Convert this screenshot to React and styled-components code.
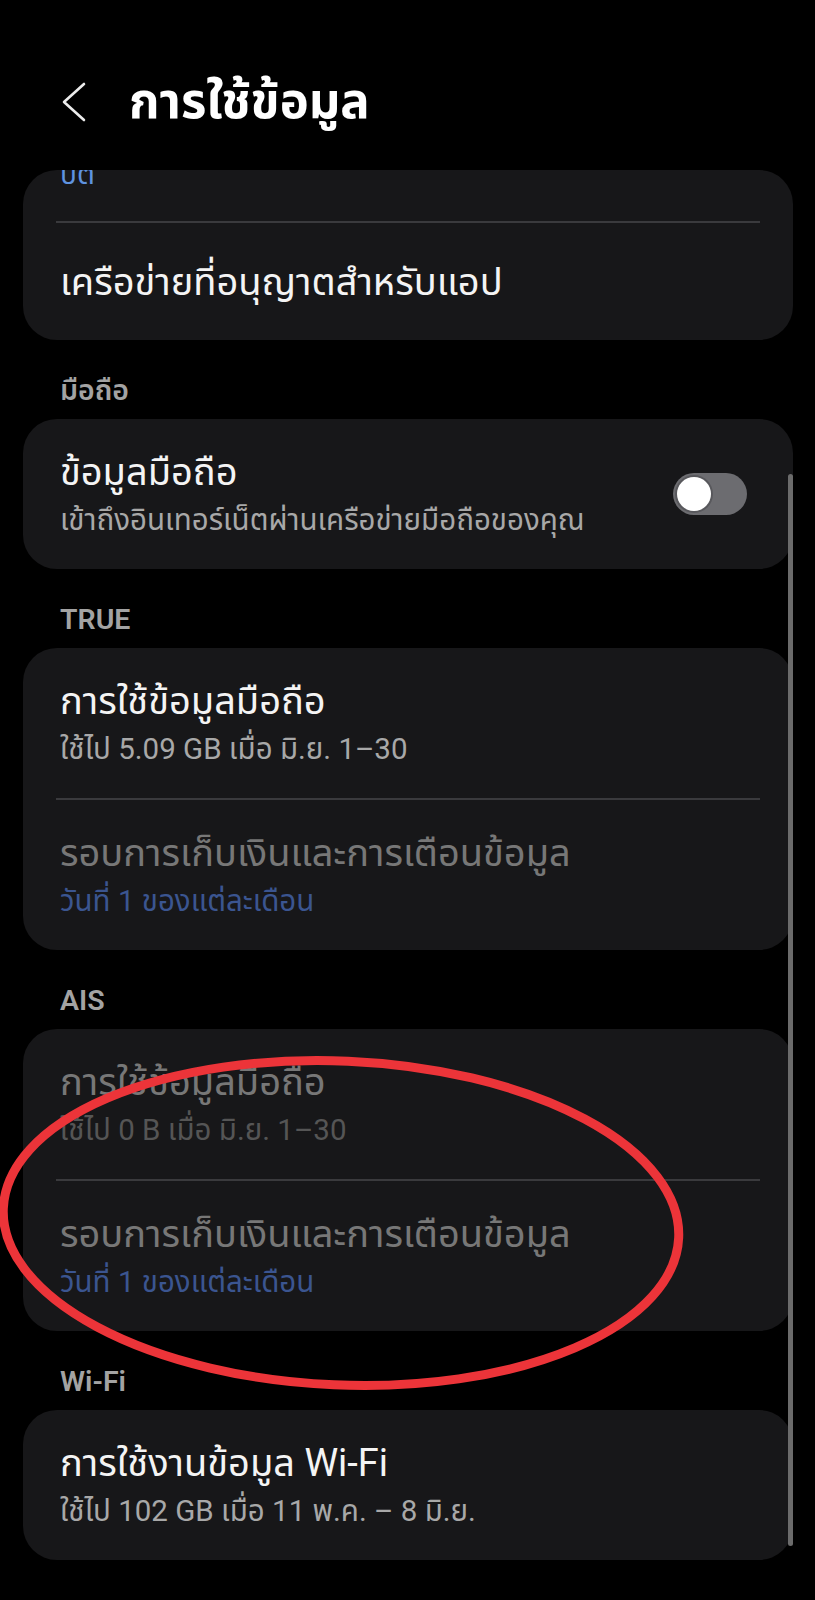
import React from 'react';
import styled, { createGlobalStyle } from 'styled-components';

const GlobalStyle = createGlobalStyle`
  html, body {
    margin: 0;
    padding: 0;
    background: #000;
  }
  body {
    font-family: Roboto, 'Noto Sans Thai', 'Noto Sans', 'DejaVu Sans', sans-serif;
    -webkit-font-smoothing: antialiased;
  }
`;

const tones = {
  primary: '#f4f4f4',
  secondary: '#a8a8a8',
  disabled: '#777777',
  faint: '#555555',
  link: '#3b5590',
  accent: '#5f93e0',
};

const Page = styled.div`
  position: relative;
  width: 815px;
  min-height: 1600px;
  background: #000;
  overflow: hidden;
`;

const Header = styled.header`
  height: 170px;
  box-sizing: border-box;
  padding: 70px 0 0 61px;
`;

const HeaderRow = styled.div`
  display: flex;
  align-items: center;
  height: 64px;
  gap: 42px;
`;

const BackButton = styled.button`
  display: flex;
  align-items: center;
  padding: 0;
  border: none;
  background: none;
  color: #ececec;
`;

const Title = styled.h1`
  margin: 0;
  font-size: 49px;
  line-height: 64px;
  font-weight: 700;
  color: #fff;
`;

const List = styled.div`
  padding: 0 22px 0 23px;
`;

const Card = styled.section`
  background: #171719;
  border-radius: 34px;
  overflow: hidden;
`;

const ClippedLine = styled.div`
  height: 51px;
  padding-left: 37px;
  overflow: hidden;
  font-size: 28px;
  line-height: 36px;
  color: ${tones.accent};
  span {
    display: block;
    margin-top: -13px;
  }
`;

const Divider = styled.hr`
  margin: 0 33px;
  border: none;
  height: 2px;
  background: #3a3a3d;
`;

const Row = styled.div`
  display: flex;
  align-items: center;
  justify-content: space-between;
  box-sizing: border-box;
  min-height: ${(p) => (p.$single ? '117px' : '150px')};
  padding: 0 46px 0 37px;
`;

const RowText = styled.div`
  display: flex;
  flex-direction: column;
`;

const RowTitle = styled.div`
  font-size: 38px;
  line-height: 48px;
  color: ${(p) => tones[p.$tone || 'primary']};
`;

const RowSub = styled.div`
  margin-top: 4px;
  font-size: 29.5px;
  line-height: 40px;
  color: ${(p) => tones[p.$tone || 'secondary']};
`;

const SectionLabel = styled.h2`
  margin: 0;
  box-sizing: border-box;
  height: 79px;
  padding: 32px 0 0 37px;
  font-size: 28.5px;
  line-height: 38px;
  font-weight: 600;
  color: #a3a3a3;
`;

const Track = styled.div`
  position: relative;
  width: 74px;
  height: 42px;
  border-radius: 21px;
  background: #6c6c70;
  flex-shrink: 0;
`;

const Thumb = styled.div`
  position: absolute;
  top: 4px;
  left: 4px;
  width: 34px;
  height: 34px;
  border-radius: 50%;
  background: #fff;
  box-shadow: 0 0 0 2px #58585c;
`;

const Scrollbar = styled.div`
  position: absolute;
  left: 788px;
  top: 474px;
  width: 5px;
  height: 1072px;
  border-radius: 3px;
  background: #6b6b6b;
`;

const Annotation = styled.svg`
  position: absolute;
  left: 0;
  top: 0;
  pointer-events: none;
`;

const Toggle = ({ on }) => (
  <Track>
    <Thumb style={on ? { left: 36 } : undefined} />
  </Track>
);

const ChevronLeft = () => (
  <svg width='26' height='40' viewBox='0 0 26 40' fill='none'>
    <path
      d='M23 2 L3 20 L23 38'
      stroke='currentColor'
      strokeWidth='2.6'
      strokeLinecap='round'
      strokeLinejoin='round'
    />
  </svg>
);

const SimRows = ({ usage, usageTone, titleTone }) => (
  <Card>
    <Row>
      <RowText>
        <RowTitle $tone={titleTone}>การใช้ข้อมูลมือถือ</RowTitle>
        <RowSub $tone={usageTone}>{usage}</RowSub>
      </RowText>
    </Row>
    <Divider />
    <Row>
      <RowText>
        <RowTitle $tone='disabled'>รอบการเก็บเงินและการเตือนข้อมูล</RowTitle>
        <RowSub $tone='link'>วันที่ 1 ของแต่ละเดือน</RowSub>
      </RowText>
    </Row>
  </Card>
);

export default function App() {
  return (
    <Page>
      <GlobalStyle />
      <Header>
        <HeaderRow>
          <BackButton aria-label='ย้อนกลับ'>
            <ChevronLeft />
          </BackButton>
          <Title>การใช้ข้อมูล</Title>
        </HeaderRow>
      </Header>

      <List>
        <Card>
          <ClippedLine>
            <span>บต</span>
          </ClippedLine>
          <Divider />
          <Row $single>
            <RowTitle>เครือข่ายที่อนุญาตสำหรับแอป</RowTitle>
          </Row>
        </Card>

        <SectionLabel>มือถือ</SectionLabel>
        <Card>
          <Row>
            <RowText>
              <RowTitle>ข้อมูลมือถือ</RowTitle>
              <RowSub>เข้าถึงอินเทอร์เน็ตผ่านเครือข่ายมือถือของคุณ</RowSub>
            </RowText>
            <Toggle on={false} />
          </Row>
        </Card>

        <SectionLabel>TRUE</SectionLabel>
        <SimRows usage='ใช้ไป 5.09 GB เมื่อ มิ.ย. 1–30' />

        <SectionLabel>AIS</SectionLabel>
        <SimRows
          usage='ใช้ไป 0 B เมื่อ มิ.ย. 1–30'
          titleTone='disabled'
          usageTone='faint'
        />

        <SectionLabel>Wi-Fi</SectionLabel>
        <Card>
          <Row>
            <RowText>
              <RowTitle>การใช้งานข้อมูล Wi-Fi</RowTitle>
              <RowSub>ใช้ไป 102 GB เมื่อ 11 พ.ค. – 8 มิ.ย.</RowSub>
            </RowText>
          </Row>
        </Card>
      </List>

      <Scrollbar />

      <Annotation width='815' height='1600' viewBox='0 0 815 1600'>
        <ellipse
          cx='341'
          cy='1223'
          rx='338'
          ry='162'
          transform='rotate(2.5 341 1223)'
          fill='none'
          stroke='#ec3439'
          strokeWidth='9'
        />
      </Annotation>
    </Page>
  );
}
